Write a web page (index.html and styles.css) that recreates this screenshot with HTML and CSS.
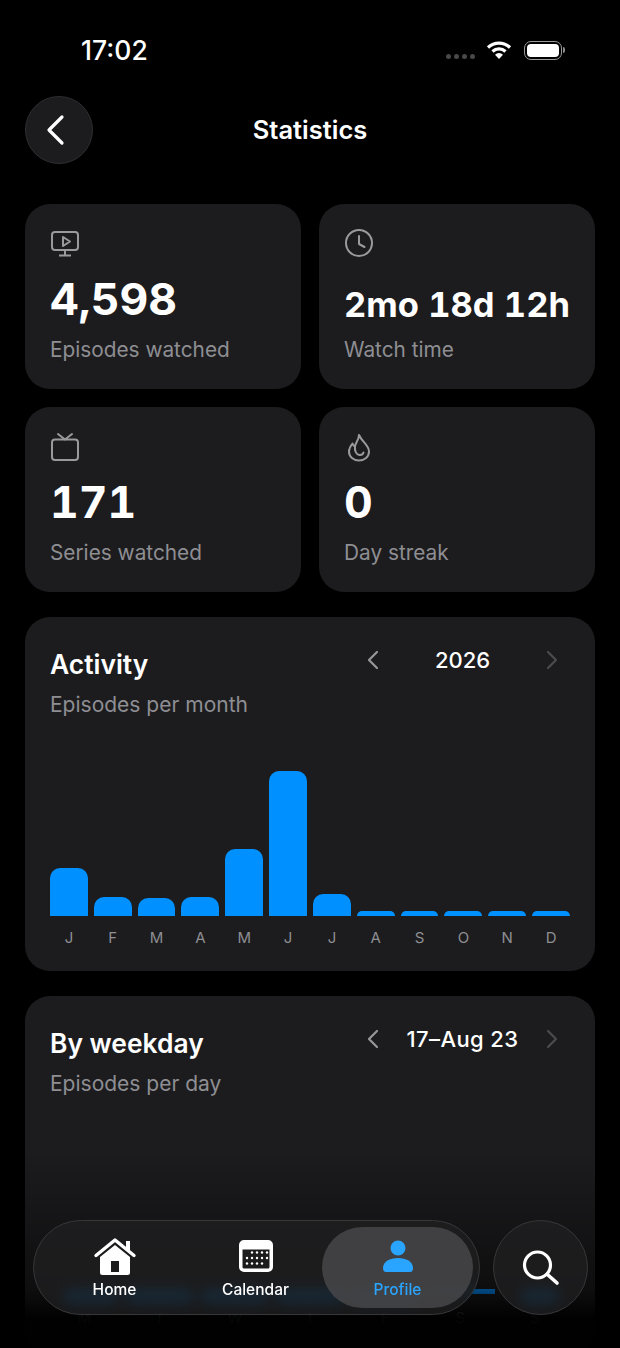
FILE: index.html
```html
<!DOCTYPE html>
<html lang="en">
<head>
    <meta charset="UTF-8">
    <meta name="viewport" content="width=device-width, initial-scale=1.0">
    <title>Statistics</title>
    <link rel="stylesheet" href="styles.css">
</head>
<body>
    <div class="screen">
        <!-- Status bar -->
        <div class="status-bar">
            <span class="clock">17:02</span>
            <div class="status-icons">
                <div class="signal"><i></i><i></i><i></i><i></i></div>
                <svg class="wifi" width="26" height="20" viewBox="0 0 26 20">
                    <path d="M2 7.5a16 16 0 0 1 22 0" fill="none" stroke="#fff" stroke-width="3.2"/>
                    <path d="M6.5 11.5a9.5 9.5 0 0 1 13 0" fill="none" stroke="#fff" stroke-width="3.2"/>
                    <path d="M13 19l-4-4.2a5.6 5.6 0 0 1 8 0z" fill="#fff"/>
                </svg>
                <div class="battery"><div class="battery-fill"></div></div>
                <div class="battery-cap"></div>
            </div>
        </div>

        <!-- Header -->
        <div class="header">
            <button class="back-btn">
                <svg width="24" height="32" viewBox="0 0 24 32"><path d="M18 3L5 16l13 13" fill="none" stroke="#fff" stroke-width="3.2" stroke-linecap="round" stroke-linejoin="round"/></svg>
            </button>
            <h1 class="title">Statistics</h1>
        </div>

        <!-- Summary cards -->
        <div class="summary">
            <div class="card stat">
                <svg class="stat-icon" width="30" height="30" viewBox="0 0 30 30" fill="none" stroke="#9a9a9c" stroke-width="2">
                    <rect x="2" y="3" width="26" height="18" rx="3"/>
                    <path d="M13 8l7 4.5-7 4.5z" stroke-linejoin="round"/>
                    <path d="M15 21v5M9 26.5h12"/>
                </svg>
                <div class="stat-value">4,598</div>
                <div class="stat-label">Episodes watched</div>
            </div>
            <div class="card stat">
                <svg class="stat-icon" width="30" height="30" viewBox="0 0 30 30" fill="none" stroke="#9a9a9c" stroke-width="2">
                    <circle cx="15" cy="14" r="13"/>
                    <path d="M15 7v8l5.5 3" stroke-linecap="round" stroke-linejoin="round"/>
                </svg>
                <div class="stat-value time">2mo 18d 12h</div>
                <div class="stat-label">Watch time</div>
            </div>
            <div class="card stat">
                <svg class="stat-icon" width="30" height="30" viewBox="0 0 30 30" fill="none" stroke="#9a9a9c" stroke-width="2">
                    <rect x="2" y="7.5" width="26" height="20.5" rx="3"/>
                    <path d="M8 2l7 5.5L22 2" stroke-linecap="round" stroke-linejoin="round"/>
                </svg>
                <div class="stat-value">171</div>
                <div class="stat-label">Series watched</div>
            </div>
            <div class="card stat">
                <svg class="stat-icon" width="30" height="30" viewBox="0 0 30 30" fill="none" stroke="#9a9a9c" stroke-width="2">
                    <path d="M15 3C15 8 11.5 10.5 11 14.5C10 14 9 13 8.5 11.5C6.5 14 5 16.5 5 19.5C5 25 9.5 28.5 15 28.5C20.5 28.5 25 25 25 19.5C25 13 18 10 15 3Z" stroke-linejoin="round"/>
                    <path d="M11 14.5C10.5 18.5 12 22.5 15.5 23C17.5 23.2 19 22.2 19.5 20.5" stroke-linecap="round"/>
                </svg>
                <div class="stat-value">0</div>
                <div class="stat-label">Day streak</div>
            </div>
        </div>

        <!-- Activity chart -->
        <div class="card chart-card">
            <div class="chart-head">
                <div>
                    <h2 class="chart-title">Activity</h2>
                    <div class="chart-sub">Episodes per month</div>
                </div>
                <div class="pager">
                    <svg width="14" height="20" viewBox="0 0 14 20"><path d="M11 2L3 10l8 8" fill="none" stroke="#98989a" stroke-width="2.2" stroke-linecap="round" stroke-linejoin="round"/></svg>
                    <span class="pager-label">2026</span>
                    <svg width="14" height="20" viewBox="0 0 14 20"><path d="M3 2l8 8-8 8" fill="none" stroke="#4c4c4e" stroke-width="2.2" stroke-linecap="round" stroke-linejoin="round"/></svg>
                </div>
            </div>
            <div class="bars months">
                <div class="bar-col"><div class="bar" style="height:48px"></div></div>
                <div class="bar-col"><div class="bar" style="height:19px"></div></div>
                <div class="bar-col"><div class="bar" style="height:18px"></div></div>
                <div class="bar-col"><div class="bar" style="height:19px"></div></div>
                <div class="bar-col"><div class="bar" style="height:67px"></div></div>
                <div class="bar-col"><div class="bar" style="height:145px"></div></div>
                <div class="bar-col"><div class="bar" style="height:22px"></div></div>
                <div class="bar-col"><div class="bar" style="height:5px"></div></div>
                <div class="bar-col"><div class="bar" style="height:5px"></div></div>
                <div class="bar-col"><div class="bar" style="height:5px"></div></div>
                <div class="bar-col"><div class="bar" style="height:5px"></div></div>
                <div class="bar-col"><div class="bar" style="height:5px"></div></div>
            </div>
            <div class="axis months">
                <span>J</span><span>F</span><span>M</span><span>A</span><span>M</span><span>J</span><span>J</span><span>A</span><span>S</span><span>O</span><span>N</span><span>D</span>
            </div>
        </div>

        <!-- Weekday chart -->
        <div class="card chart-card weekday">
            <div class="chart-head">
                <div>
                    <h2 class="chart-title">By weekday</h2>
                    <div class="chart-sub">Episodes per day</div>
                </div>
                <div class="pager">
                    <svg width="14" height="20" viewBox="0 0 14 20"><path d="M11 2L3 10l8 8" fill="none" stroke="#98989a" stroke-width="2.2" stroke-linecap="round" stroke-linejoin="round"/></svg>
                    <span class="pager-label wide">17–Aug 23</span>
                    <svg width="14" height="20" viewBox="0 0 14 20"><path d="M3 2l8 8-8 8" fill="none" stroke="#4c4c4e" stroke-width="2.2" stroke-linecap="round" stroke-linejoin="round"/></svg>
                </div>
            </div>
            <div class="bars days">
                <div class="bar-col"><div class="bar" style="height:17px"></div></div>
                <div class="bar-col"><div class="bar" style="height:17px"></div></div>
                <div class="bar-col"><div class="bar" style="height:17px"></div></div>
                <div class="bar-col"><div class="bar" style="height:17px"></div></div>
                <div class="bar-col"><div class="bar" style="height:17px"></div></div>
                <div class="bar-col short"><div class="bar" style="height:5px"></div></div>
                <div class="bar-col"><div class="bar" style="height:17px"></div></div>
            </div>
            <div class="axis days">
                <span>M</span><span>T</span><span>W</span><span>T</span><span>F</span><span>S</span><span>S</span>
            </div>
        </div>

        <!-- Bottom fade + tab bar -->
        <div class="fade"></div>
        <div class="tab-area">
            <nav class="tabs">
                <div class="tab">
                    <div class="tab-icon">
                        <svg width="44" height="38" viewBox="0 0 44 38">
                            <path d="M3 18.5L22 3l19 15.5" fill="none" stroke="#fff" stroke-width="3.4" stroke-linecap="round" stroke-linejoin="round"/>
                            <rect x="33" y="4" width="4" height="9" fill="#fff"/>
                            <path fill-rule="evenodd" d="M7 20L22 8l15 12v15.5a2.5 2.5 0 0 1-2.5 2.5h-25A2.5 2.5 0 0 1 7 35.5zM18 24v11h8V24z" fill="#fff"/>
                        </svg>
                    </div>
                    <span class="tab-label">Home</span>
                </div>
                <div class="tab">
                    <div class="tab-icon">
                        <svg width="34" height="32" viewBox="0 0 34 32">
                            <path fill-rule="evenodd" d="M5 0h24a5 5 0 0 1 5 5v22a5 5 0 0 1-5 5H5a5 5 0 0 1-5-5V5a5 5 0 0 1 5-5zM3.5 9.5V27A1.5 1.5 0 0 0 5 28.5h24a1.5 1.5 0 0 0 1.500-1.500V9.500z" fill="#fff"/>
                            <g fill="#fff">
                                <circle cx="13" cy="12.5" r="1.2"/><circle cx="18" cy="12.5" r="1.2"/><circle cx="23" cy="12.5" r="1.2"/><circle cx="28" cy="12.5" r="1.2"/>
                                <circle cx="8" cy="18" r="1.2"/><circle cx="13" cy="18" r="1.2"/><circle cx="18" cy="18" r="1.2"/><circle cx="23" cy="18" r="1.2"/><circle cx="28" cy="18" r="1.2"/>
                                <circle cx="8" cy="23.5" r="1.2"/><circle cx="13" cy="23.5" r="1.2"/><circle cx="18" cy="23.5" r="1.2"/><circle cx="23" cy="23.5" r="1.2"/>
                            </g>
                        </svg>
                    </div>
                    <span class="tab-label">Calendar</span>
                </div>
                <div class="tab active">
                    <div class="tab-icon">
                        <svg width="32" height="32" viewBox="0 0 32 32" fill="#2aa5ff">
                            <circle cx="16" cy="8" r="7.5"/>
                            <path d="M1 28c0-6.5 7-10 15-10s15 3.5 15 10c0 2.5-1 4-3 4H4c-2 0-3-1.5-3-4z"/>
                        </svg>
                    </div>
                    <span class="tab-label">Profile</span>
                </div>
            </nav>
            <button class="search-btn">
                <svg width="38" height="38" viewBox="0 0 38 38" fill="none" stroke="#fff" stroke-linecap="round">
                    <circle cx="15.5" cy="16" r="13" stroke-width="3.2"/>
                    <path d="M26 26l9 8" stroke-width="3.6"/>
                </svg>
            </button>
        </div>
    </div>
</body>
</html>
```

FILE: styles.css
```css
* {
    box-sizing: border-box;
}
html, body {
    margin: 0;
    background-color: #000;
}
body {
    font-family: Inter, "Liberation Sans", sans-serif;
    color: #fff;
}
h1, h2 {
    margin: 0;
}
button {
    padding: 0;
    font: inherit;
    color: inherit;
    cursor: pointer;
}

.screen {
    position: relative;
    width: 620px;
    height: 1348px;
    overflow: hidden;
    padding: 0 25px;
    background-color: #000;
}

/* Status bar */
.status-bar {
    height: 96px;
    padding: 36px 0 0 56px;
    display: flex;
    justify-content: space-between;
    align-items: flex-start;
}
.clock {
    font-size: 26.5px;
    font-weight: 500;
    line-height: 28px;
}
.status-icons {
    display: flex;
    align-items: center;
    height: 28px;
    padding-right: 30px;
}
.signal {
    display: flex;
    gap: 3px;
    margin: 13px 11px 0 0;
}
.signal i {
    width: 5px;
    height: 5px;
    border-radius: 50%;
    background-color: #48484a;
}
.wifi {
    margin-right: 12px;
}
.battery {
    width: 38px;
    height: 19px;
    padding: 2px;
    border: 1.5px solid #9a9a9a;
    border-radius: 7px;
}
.battery-fill {
    height: 100%;
    background-color: #fff;
    border-radius: 4px;
}
.battery-cap {
    width: 2px;
    height: 6px;
    margin-left: 1px;
    background-color: #8a8a8a;
    border-radius: 0 2px 2px 0;
}

/* Header */
.header {
    height: 68px;
    display: flex;
    align-items: center;
    margin-bottom: 40px;
}
.back-btn {
    width: 68px;
    height: 68px;
    padding-right: 6px;
    border-radius: 50%;
    border: 1px solid #2e2e30;
    background-color: #1c1c1e;
    display: flex;
    align-items: center;
    justify-content: center;
}
.title {
    flex: 1;
    margin: -2px 68px 0 0;
    text-align: center;
    font-size: 25.5px;
    font-weight: 600;
}

/* Cards */
.card {
    background-color: #1c1c1e;
    border-radius: 25px;
}
.summary {
    display: grid;
    grid-template-columns: 275.5px 276px;
    gap: 18.5px;
    margin-bottom: 25.5px;
}
.stat {
    height: 184.5px;
    padding: 25px 25px 0;
}
.stat-icon {
    display: block;
}
.stat-value {
    height: 62px;
    margin-top: 9px;
    font-size: 44.5px;
    font-weight: 700;
    line-height: 62px;
    font-feature-settings: "tnum";
}
.stat-value.time {
    font-size: 34.5px;
    padding-top: 6px;
    white-space: nowrap;
}
.stat-label {
    margin-top: 5px;
    font-size: 20.8px;
    line-height: 30px;
    color: #8e8e93;
}

/* Charts */
.chart-card {
    height: 354px;
    padding: 25px;
    margin-bottom: 25px;
}
.chart-card.weekday {
    height: 360px;
}
.chart-head {
    height: 90px;
    display: flex;
    justify-content: space-between;
    align-items: flex-start;
}
.chart-title {
    font-size: 26.4px;
    font-weight: 600;
    line-height: 44px;
}
.chart-sub {
    margin-top: 4px;
    font-size: 21px;
    line-height: 30px;
    color: #8e8e93;
}
.pager {
    width: 204px;
    height: 36px;
    padding-right: 11px;
    display: flex;
    align-items: center;
    justify-content: space-between;
}
.pager-label {
    font-size: 22px;
    font-weight: 500;
}
.pager-label.wide {
    letter-spacing: 0.4px;
}

.bars, .axis {
    display: grid;
    gap: 6px;
}
.months {
    grid-template-columns: repeat(12, 1fr);
}
.days {
    grid-template-columns: repeat(7, 1fr);
}
.bars.months {
    height: 184px;
}
.bars.days {
    height: 195px;
}
.bar-col {
    display: flex;
    align-items: flex-end;
}
.bar-col.short {
    align-items: flex-start;
    padding-top: 178px;
}
.bar {
    width: 100%;
    background-color: #0090ff;
    border-radius: 10px 10px 0 0;
}
.days .bar {
    border-radius: 8px;
}
.days .bar-col:first-child .bar {
    margin-left: 13px;
}
.days .bar-col:last-child .bar {
    margin: 0 11px 0 19px;
}
.days .bar-col.short .bar {
    border-radius: 0;
}
.axis {
    margin-top: 13px;
    text-align: center;
    font-size: 15px;
    line-height: 18px;
    color: #8e8e93;
}
.axis.days {
    margin-top: 3px;
}

/* Bottom fade + tab bar, these float over the page */
.fade {
    position: absolute;
    left: 0;
    right: 0;
    bottom: 0;
    height: 200px;
    background: linear-gradient(to bottom, rgba(0,0,0,0), rgba(0,0,0,0.5) 71%, rgba(0,0,0,0.96) 85%, rgba(0,0,0,0.98));
}
.tab-area {
    position: absolute;
    left: 33px;
    top: 1220px;
    display: flex;
    gap: 13px;
}
.tabs {
    width: 447px;
    height: 95px;
    padding: 6px 4px 6px 10px;
    display: flex;
    border: 1.5px solid #38383a;
    border-radius: 48px;
    background-color: rgba(32,32,34,0.74);
    backdrop-filter: blur(6px);
}
.tab {
    flex: 0 0 141px;
    display: flex;
    flex-direction: column;
    align-items: center;
    padding-top: 10px;
}
.tab.active {
    flex: 0 0 151px;
    margin-left: -4px;
    background-color: rgba(72,72,74,0.85);
    border-radius: 42px;
}
.tab-icon {
    height: 38px;
    display: flex;
    align-items: center;
}
.tab-label {
    margin-top: 6px;
    font-size: 15.5px;
    font-weight: 500;
    line-height: 18px;
}
.active .tab-label {
    color: #2aa5ff;
}
.search-btn {
    width: 95px;
    height: 95px;
    border-radius: 50%;
    border: 1.5px solid #38383a;
    background-color: rgba(32,32,34,0.74);
    backdrop-filter: blur(6px);
    display: flex;
    align-items: center;
    justify-content: center;
}
```
